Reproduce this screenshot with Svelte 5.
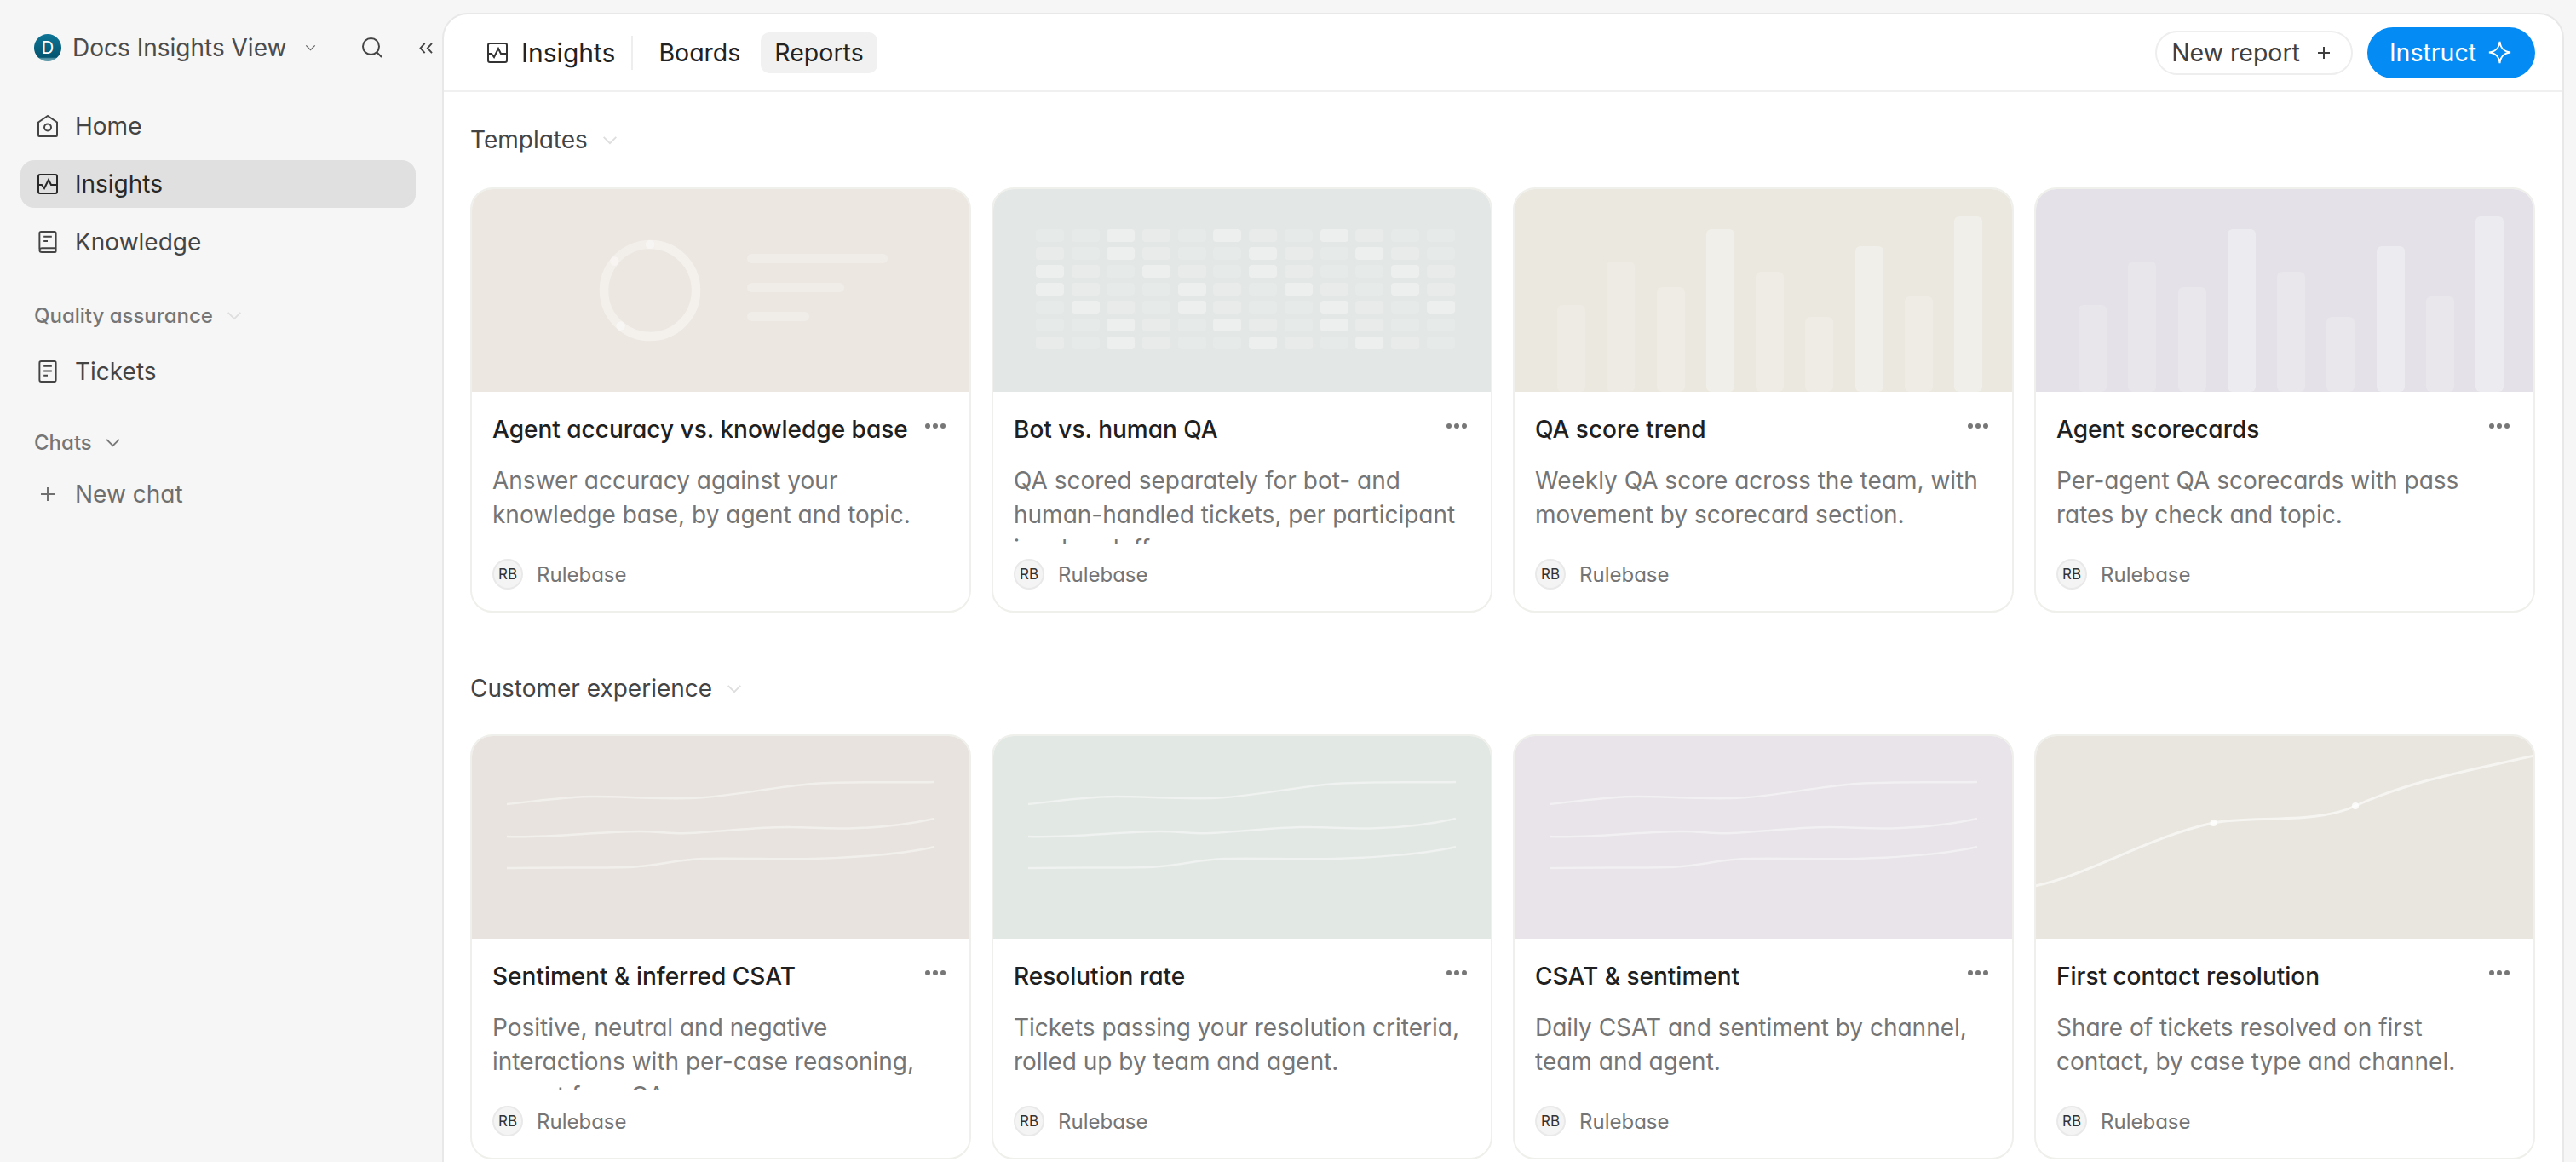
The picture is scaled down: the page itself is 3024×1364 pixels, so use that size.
<script>
	const heat = [
		"113213213211",
		"213211321321",
		"321321321132",
		"321132132132",
		"132132113213",
		"113213213211",
		"213211321321"
	];
	const heatAlpha = [0.06, 0.12, 0.2, 0.36];

	const bars = [
		{ h: 102, a: 0.16 },
		{ h: 153, a: 0.16 },
		{ h: 123, a: 0.18 },
		{ h: 191, a: 0.32 },
		{ h: 141, a: 0.18 },
		{ h: 88, a: 0.18 },
		{ h: 171, a: 0.32 },
		{ h: 112, a: 0.2 },
		{ h: 206, a: 0.32 }
	];

	const sections = [
		{
			title: "Templates",
			cards: [
				{ title: "Agent accuracy vs. knowledge base", desc: "Answer accuracy against your knowledge base, by agent and topic.", kind: "donut", bg: "#ece7e1" },
				{ title: "Bot vs. human QA", desc: "QA scored separately for bot- and human-handled tickets, per participant in a handoff.", kind: "heat", bg: "#e3e7e5" },
				{ title: "QA score trend", desc: "Weekly QA score across the team, with movement by scorecard section.", kind: "bars", bg: "#ebe8df" },
				{ title: "Agent scorecards", desc: "Per-agent QA scorecards with pass rates by check and topic.", kind: "bars", bg: "#e4e2e8" }
			]
		},
		{
			title: "Customer experience",
			cards: [
				{ title: "Sentiment & inferred CSAT", desc: "Positive, neutral and negative interactions with per-case reasoning, export from QA.", kind: "lines", bg: "#e8e3de" },
				{ title: "Resolution rate", desc: "Tickets passing your resolution criteria, rolled up by team and agent.", kind: "lines", bg: "#e2e8e3" },
				{ title: "CSAT & sentiment", desc: "Daily CSAT and sentiment by channel, team and agent.", kind: "lines", bg: "#e8e4e9" },
				{ title: "First contact resolution", desc: "Share of tickets resolved on first contact, by case type and channel.", kind: "trend", bg: "#e9e6df" }
			]
		}
	];
</script>

{#snippet chevron(cls)}
	<svg class={cls} viewBox="0 0 20 12" fill="none"><path d="M2 2l8 8 8-8" /></svg>
{/snippet}

{#snippet pulse(cls)}
	<svg class={cls} viewBox="0 0 24 24" fill="none">
		<rect x="1" y="1" width="22" height="22" rx="2" />
		<path d="M1 13h4l3 4 5-10 3 6h7" />
	</svg>
{/snippet}

<div class="app">
	<aside class="sidebar">
		<div class="workspace">
			<span class="logo">D</span>
			<span class="ws-name">Docs Insights View</span>
			{@render chevron("ws-chev")}
			<svg class="search" viewBox="0 0 24 24" fill="none"><circle cx="10.5" cy="10.5" r="9.5" /><path d="M17.5 17.5L23 23" /></svg>
			<svg class="collapse" viewBox="0 0 18 14" fill="none"><path d="M7 1L1.5 7 7 13M16 1l-5.500 6 5.500 6" /></svg>
		</div>

		<nav class="nav">
			<div class="nav-item">
				<svg class="nav-icon" viewBox="0 0 24 26" fill="none"><path d="M1 8.500L12 1l11 7.500V24a1 1 0 0 1-1 1H2a1 1 0 0 1-1-1z" /><circle cx="12" cy="14.500" r="4" /></svg>
				Home
			</div>
			<div class="nav-item active">
				{@render pulse("nav-icon")}
				Insights
			</div>
			<div class="nav-item">
				<svg class="nav-icon" viewBox="0 0 24 27" fill="none"><path d="M2 22V3a2 2 0 0 1 2-2h16a2 2 0 0 1 2 2v22a1 1 0 0 1-1 1H5a3 3 0 0 1-3-3 3 3 0 0 1 3-2h17" /><path d="M7 7h10M7 12.500h5" /></svg>
				Knowledge
			</div>
		</nav>

		<div class="group-label qa">Quality assurance {@render chevron("faint-chev")}</div>
		<div class="nav-item">
			<svg class="nav-icon" viewBox="0 0 24 27" fill="none"><rect x="2" y="1" width="20" height="25" rx="2" /><path d="M7 7h10M7 13h10M7 18.500h5" /></svg>
			Tickets
		</div>

		<div class="group-label chats">Chats {@render chevron("chats-chev")}</div>
		<div class="nav-item new-chat">
			<svg class="nav-icon plus" viewBox="0 0 24 24" fill="none"><path d="M12 4v16M4 12h16" /></svg>
			New chat
		</div>
	</aside>

	<main class="main">
		<header class="topbar">
			<div class="crumb">
				{@render pulse("crumb-icon")}
				<span>Insights</span>
			</div>
			<span class="divider"></span>
			<div class="tabs">
				<span class="tab">Boards</span>
				<span class="tab current">Reports</span>
			</div>
			<div class="actions">
				<button class="btn-outline">New report <svg viewBox="0 0 16 16" fill="none"><path d="M8 1v14M1 8h14" /></svg></button>
				<button class="btn-primary">Instruct
					<svg viewBox="0 0 28 28" fill="none"><path d="M14 1c1 8 4.500 12 13 13-8.500 1-12 5-13 13-1-8-4.500-12-13-13 8.500-1 12-5 13-13z" /></svg>
				</button>
			</div>
		</header>

		<div class="content">
			{#each sections as section}
				<section class="section">
					<h2 class="section-title">{section.title} {@render chevron("faint-chev")}</h2>
					<div class="grid">
						{#each section.cards as card}
							<article class="card">
								<div class="preview" style="background: {card.bg}">
									{#if card.kind === "donut"}
										<div class="donut-wrap">
											<svg class="donut" viewBox="0 0 120 120" fill="none">
												<circle cx="60" cy="60" r="54" pathLength="100" stroke-dasharray="14 100" stroke-dashoffset="-86" class="seg-c" transform="rotate(-90 60 60)" />
												<circle cx="60" cy="60" r="54" pathLength="100" stroke-dasharray="25 100" stroke-dashoffset="-61" class="seg-b" transform="rotate(-90 60 60)" />
												<circle cx="60" cy="60" r="54" pathLength="100" stroke-dasharray="61 100" class="seg-a" transform="rotate(-90 60 60)" />
											</svg>
											<div class="legend">
												<span class="l1"></span>
												<span class="l2"></span>
												<span class="l3"></span>
											</div>
										</div>
									{:else if card.kind === "heat"}
										<div class="heat">
											{#each heat as row}
												{#each row.split("") as v}
													<span style="opacity: {heatAlpha[v]}"></span>
												{/each}
											{/each}
										</div>
									{:else if card.kind === "bars"}
										<div class="bars">
											{#each bars as bar}
												<span style="height: {bar.h}px; opacity: {bar.a}"></span>
											{/each}
										</div>
									{:else if card.kind === "lines"}
										<svg class="chart" viewBox="0 0 584 238" fill="none">
											<path d="M41 80C80 76 110 71 144 71 180 71 210 74 255 73 300 72 350 60 401 56 450 53 500 55 543 54" />
											<path d="M41 118C90 120 150 112 196 112 220 112 235 115 255 114 300 112 340 106 374 107 400 107 420 110 453 108 490 107 520 102 543 97" />
											<path d="M41 155C90 154 140 155 184 154 220 152 240 145 271 144 310 143 360 145 401 144 450 143 510 138 543 130" />
										</svg>
									{:else}
										<svg class="chart trend" viewBox="0 0 584 238" fill="none">
											<path d="M-1 176C60 164 130 119 208 102 250 93 330 104 375 82 440 52 520 38 585 23" />
											<circle cx="208.500" cy="102" r="4" />
											<circle cx="375" cy="82" r="4" />
										</svg>
									{/if}
								</div>
								<div class="body">
									<div class="title-row">
										<h3>{card.title}</h3>
										<span class="more"><i></i><i></i><i></i></span>
									</div>
									<p class="desc">{card.desc}</p>
									<div class="owner">
										<span class="avatar">RB</span>
										<span class="owner-name">Rulebase</span>
									</div>
								</div>
							</article>
						{/each}
					</div>
				</section>
			{/each}
		</div>
	</main>
</div>

<style>
	:global(body) {
		margin: 0;
		background: #f6f6f6;
		overflow: hidden;
	}

	.app {
		display: flex;
		width: 3024px;
		height: 1364px;
		overflow: hidden;
		font-family: Inter, "Noto Sans", sans-serif;
		font-feature-settings: "cv11" 1;
		font-size: 28px;
		color: #444;
	}

	svg {
		stroke: currentColor;
		stroke-width: 2;
		flex: none;
	}

	.sidebar {
		width: 519px;
		flex: none;
		box-sizing: border-box;
		padding: 40px 31px 0 24px;
		display: flex;
		flex-direction: column;
	}

	.workspace {
		display: flex;
		align-items: center;
		height: 32px;
		padding-left: 16px;
		margin-right: -12px;
		margin-bottom: 48px;
		color: #4c4c4c;
	}

	.logo {
		width: 32px;
		height: 32px;
		border-radius: 50%;
		background: linear-gradient(#0e7596, #045570 85%, #5b98a8 90%);
		color: #fff;
		font-size: 20px;
		display: flex;
		align-items: center;
		justify-content: center;
		flex: none;
	}

	.ws-name {
		margin-left: 13px;
		white-space: nowrap;
	}

	.ws-chev {
		width: 13px;
		height: 8px;
		margin-left: 22px;
		color: #666;
	}

	.search {
		width: 24px;
		height: 24px;
		margin-left: 54px;
		color: #444;
	}

	.collapse {
		width: 17px;
		height: 13px;
		margin-left: 43px;
		color: #444;
	}

	.nav {
		display: flex;
		flex-direction: column;
		gap: 12px;
	}

	.nav-item {
		display: flex;
		align-items: center;
		height: 56px;
		padding-left: 20px;
		border-radius: 16px;
		color: #444;
		white-space: nowrap;
	}

	.nav-item.active {
		background: #e0e0e0;
		color: #282828;
	}

	.nav-icon {
		width: 24px;
		height: 26px;
		margin-right: 20px;
	}

	.plus {
		color: #707070;
	}

	.new-chat {
		color: #6e6e6e;
	}

	.group-label {
		display: flex;
		align-items: center;
		padding-left: 16px;
		color: #767676;
		font-size: 24px;
		font-weight: 500;
		height: 40px;
		gap: 15px;
	}

	.qa {
		margin-top: 38px;
		margin-bottom: 18px;
	}

	.chats {
		margin-top: 35px;
		margin-bottom: 13px;
	}

	.faint-chev {
		width: 20px;
		height: 11px;
		color: #dedede;
	}

	.chats-chev {
		width: 19px;
		height: 11px;
		color: #777;
	}

	.main {
		flex: none;
		width: 2491px;
		height: 1400px;
		margin-top: 15px;
		box-sizing: border-box;
		background: #fff;
		border: 2px solid #e8e8e8;
		border-radius: 30px 30px 0 0;
		overflow: hidden;
	}

	.topbar {
		display: flex;
		align-items: center;
		height: 89px;
		padding: 0 32px 0 51px;
		border-bottom: 2px solid #f0f0f0;
		color: #222;
	}

	.crumb {
		display: flex;
		align-items: center;
		gap: 16px;
		font-size: 30px;
	}

	.crumb-icon {
		width: 24px;
		height: 24px;
		color: #333;
	}

	.divider {
		width: 2px;
		height: 40px;
		background: #eee;
		margin: 0 14px 0 19px;
	}

	.tabs {
		display: flex;
		gap: 8px;
	}

	.tab {
		height: 48px;
		line-height: 48px;
		padding: 0 16px;
		border-radius: 10px;
		font-size: 28.500px;
	}

	.tab.current {
		background: #f1f1f1;
	}

	.actions {
		margin-left: auto;
		display: flex;
		align-items: center;
		gap: 17px;
	}

	button {
		font: inherit;
		font-size: 28.500px;
		display: flex;
		align-items: center;
		cursor: pointer;
	}

	.btn-outline {
		height: 52px;
		padding: 0 24px 0 17px;
		border: 2px solid #eee;
		border-radius: 26px;
		background: #fff;
		color: #404040;
		gap: 20px;
	}

	.btn-outline svg {
		width: 16px;
		height: 16px;
	}

	.btn-primary {
		height: 60px;
		padding: 0 28px 0 26px;
		border: 0;
		border-radius: 30px;
		background: #058cf4;
		color: #fff;
		gap: 14px;
	}

	.btn-primary svg {
		width: 27px;
		height: 27px;
	}

	.content {
		padding: 36px 32px 0 31px;
	}

	.section + .section {
		margin-top: 69px;
	}

	.section-title {
		display: flex;
		align-items: center;
		gap: 16px;
		margin: 0 0 36px;
		height: 40px;
		font-size: 28px;
		font-weight: 400;
		color: #444;
	}

	.section + .section .section-title {
		margin-bottom: 34px;
	}

	.grid {
		display: grid;
		grid-template-columns: repeat(4, 1fr);
		gap: 24px;
	}

	.card {
		box-sizing: border-box;
		border: 2px solid #efefeb;
		border-radius: 26px;
		overflow: hidden;
		background: #fff;
	}

	.preview {
		height: 238px;
		position: relative;
		overflow: hidden;
	}

	.donut-wrap {
		display: flex;
		align-items: center;
		height: 100%;
		padding-left: 149px;
	}

	.donut {
		width: 120px;
		height: 120px;
		stroke-width: 10.500;
		stroke-linecap: round;
		stroke: #fff;
	}

	.seg-a { opacity: 0.42; }
	.seg-b { opacity: 0.38; }
	.seg-c { opacity: 0.3; }

	.legend {
		display: flex;
		flex-direction: column;
		gap: 23px;
		margin-left: 54px;
		margin-bottom: 8px;
	}

	.legend span {
		display: block;
		height: 11px;
		border-radius: 6px;
		background: rgba(255, 255, 255, 0.22);
	}

	.l1 { width: 165px; }
	.l2 { width: 114px; }
	.l3 { width: 73px; }

	.heat {
		display: grid;
		grid-template-columns: repeat(12, 33px);
		grid-auto-rows: 15px;
		column-gap: 8.700px;
		row-gap: 6px;
		padding: 47px 0 0 50px;
	}

	.heat span {
		background: #fff;
		border-radius: 4px;
	}

	.bars {
		display: flex;
		align-items: flex-end;
		gap: 25.300px;
		height: 100%;
		padding-left: 50px;
	}

	.bars span {
		width: 33px;
		background: #fff;
		border-radius: 6px;
	}

	.chart {
		display: block;
		width: 100%;
		height: 100%;
	}

	.chart path {
		stroke: rgba(255, 255, 255, 0.45);
		stroke-width: 2.500;
	}

	.trend path {
		stroke: rgba(255, 255, 255, 0.6);
		stroke-width: 3;
	}

	.trend circle {
		fill: rgba(255, 255, 255, 0.8);
		stroke: none;
	}

	.body {
		padding: 24px 24px 25px;
	}

	.title-row {
		display: flex;
		align-items: flex-start;
		justify-content: space-between;
	}

	h3 {
		margin: 0;
		font-size: 28px;
		line-height: 40px;
		font-weight: 500;
		color: #202020;
		white-space: nowrap;
	}

	.more {
		display: flex;
		gap: 3px;
		margin-top: 13px;
		margin-right: 4px;
	}

	.more i {
		width: 6px;
		height: 6px;
		border-radius: 50%;
		background: #777;
	}

	.desc {
		margin: 20px 0 18px;
		height: 94px;
		overflow: hidden;
		font-size: 28px;
		line-height: 40px;
		color: #757575;
	}

	.owner {
		display: flex;
		align-items: center;
		gap: 16px;
	}

	.avatar {
		box-sizing: border-box;
		width: 36px;
		height: 36px;
		border-radius: 50%;
		background: #f4f4f4;
		border: 2px solid #e9e9e9;
		color: #333;
		font-size: 17px;
		display: flex;
		align-items: center;
		justify-content: center;
	}

	.owner-name {
		font-size: 24px;
		color: #757575;
	}
</style>
